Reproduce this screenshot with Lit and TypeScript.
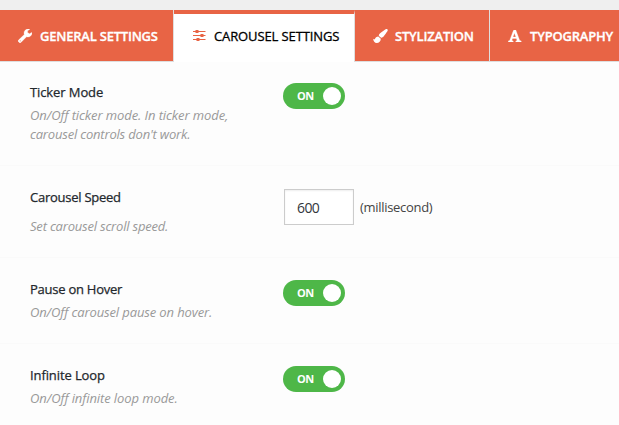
import { LitElement, html, css, svg } from "lit";
import { customElement, property } from "lit/decorators.js";
import { classMap } from "lit/directives/class-map.js";

const icons = {
  wrench: svg`<svg viewBox="0 0 14 14" width="14" height="14"><path fill="currentColor" fill-rule="evenodd" stroke="currentColor" stroke-width=".3" d="M13.700 3.400 11.500 4.700 9.600 3.600V1.700L11.800.4C11.400.1 10.600 0 10 0 7.800 0 6 1.800 6 4c0 .5.1 1 .3 1.400L.5 11.100a1.200 1.200 0 0 0 0 1.700l.7.700a1.200 1.200 0 0 0 1.700 0L8.600 7.800c.4.1.9.2 1.400.2 2.200 0 4-1.800 4-3.700 0-.4-.1-.7-.3-.9ZM2.200 12.400a.6.6 0 1 1 0-1.200.6.6 0 0 1 0 1.200Z"/></svg>`,
  sliders: svg`<svg viewBox="0 0 13 12" width="13" height="12"><path fill="currentColor" d="M0 1h12.500v1.100H0zM0 5h12.500v1.100H0zM0 9h12.500v1.100H0zM2.500 0h3v3H2.500zM7.500 4h3v3h-3zM3.500 8h3v3h-3z"/></svg>`,
  brush: svg`<svg viewBox="0 0 15 14" width="15" height="14"><path fill="currentColor" d="M13.200.1c.8-.3 1.700.4 1.500 1.300-.1.600-3.600 5.700-4.800 6.700-.7.600-1.500.8-2.100.4L6 7C5.600 6.400 5.900 5.700 6.400 5.100 7.500 3.900 12.200.4 13.200.1ZM5.300 7.500l2.500 2.200C7.800 12.300 6.100 14 3.700 14 1.600 14 .5 12.300.1 9.700c.6.4 1.300.8 1.800.5C2.500 8.500 3.500 7.500 5.300 7.500Z"/></svg>`,
  font: svg`<svg viewBox="0 0 14 12" width="14" height="12"><path fill="currentColor" fill-rule="evenodd" stroke="currentColor" stroke-width=".3" d="M5.800 0h2l3.900 10.400 1.500.5V12H7.800v-1.100l1.300-.5-.7-2H4.500l-.7 2 1.400.5V12H.3v-1.100l1.400-.5L5.100 1.300ZM6.400 3 5 7.100h2.900Z"/></svg>`,
};

@customElement("nav-tab")
class NavTab extends LitElement {
  @property() label = "";
  @property() icon: keyof typeof icons = "wrench";
  @property({ type: Boolean }) active = false;
  static styles = css`
    :host { display: block; flex: none; box-sizing: border-box; }
    .tab { display: flex; align-items: center; box-sizing: border-box; height: 52px; padding: 1px 0 0 18px; color: #fff; background: #e86445; border-right: 1px solid #e0dedd; border-bottom: 1px solid #dedede; font-weight: 600; -webkit-text-stroke: 0.3px; }
    .active { color: #000; background: #fff; border-top: 4px solid #e86445; border-bottom: 0; padding: 0 0 4px 18px; font-weight: 500; }
    .icon { display: flex; width: 22px; color: #fff; }
    .active .icon { color: #e86445; padding-left: 1px; width: 21px; }
    .label { white-space: nowrap; }
  `;
  render() {
    return html`<div class=${classMap({ tab: true, active: this.active })}>
      <span class="icon">${icons[this.icon]}</span><span class="label">${this.label}</span>
    </div>`;
  }
}

@customElement("toggle-switch")
class ToggleSwitch extends LitElement {
  static styles = css`
    :host { display: block; }
    .track { display: flex; align-items: center; justify-content: space-between; box-sizing: border-box; width: 62px; height: 26px; padding: 0 4px 0 14px; border-radius: 13px; background: #4eb748; color: #fff; font-size: 11px; font-weight: 700; letter-spacing: -0.4px; }
    .text { margin-top: -1px; }
    .knob { width: 18px; height: 18px; border-radius: 50%; background: #fff; }
  `;
  render() {
    return html`<div class="track"><span class="text">ON</span><span class="knob"></span></div>`;
  }
}

@customElement("app-root")
class AppRoot extends LitElement {
  static styles = css`
    :host { display: block; height: 425px; overflow: hidden; box-sizing: border-box; background: #fdfdfd; border-top: 10px solid #efefef; font: 13px/19px "Open Sans", "Noto Sans", sans-serif; color: #23282d; }
    .tabs { display: flex; width: 640px; }
    .general { width: 174px; letter-spacing: -0.22px; }
    .carousel { width: 181px; letter-spacing: -0.11px; }
    .style { width: 135px; letter-spacing: -0.2px; }
    .typography { width: 150px; letter-spacing: -0.2px; }
    .row { display: grid; grid-template-columns: 253px 1fr; box-sizing: border-box; padding: 22px 0 0 30px; border-bottom: 1px solid #fafafa; }
    .ticker { height: 104px; padding-top: 21px; }
    .speed { height: 92px; }
    .pause { height: 86px; }
    .loop { height: 86px; }
    .title { font-weight: 500; letter-spacing: -0.25px; -webkit-text-stroke: 0.25px; }
    .ticker .title, .loop .title { letter-spacing: -0.1px; }
    .help { margin-top: 4px; width: 215px; color: #999; font-style: italic; letter-spacing: -0.09px; }
    .tight { letter-spacing: -0.19px; }
    .pause .help { letter-spacing: -0.12px; }
    .speed .help { margin-top: 10px; letter-spacing: -0.2px; }
    .field { display: flex; align-items: center; margin: 1px 0 0 1px; height: 36px; }
    .input { box-sizing: border-box; width: 70px; height: 36px; padding: 0 12px; border: 1px solid #ccc; box-shadow: inset 0 1px 2px #00000012; background: #fff; color: #32373c; font: 14px "Open Sans", sans-serif; letter-spacing: -0.6px; }
    .unit { margin-left: 6px; color: #444; letter-spacing: -0.3px; }
  `;
  row(name: string, title: string, help: unknown, control: unknown) {
    return html`<section class="row ${name}">
      <div><div class="title">${title}</div><div class="help">${help}</div></div>
      <div>${control}</div>
    </section>`;
  }
  render() {
    const toggle = html`<toggle-switch></toggle-switch>`;
    return html`
      <nav class="tabs">
        <nav-tab class="general" icon="wrench" label="GENERAL SETTINGS"></nav-tab>
        <nav-tab class="carousel" icon="sliders" label="CAROUSEL SETTINGS" active></nav-tab>
        <nav-tab class="style" icon="brush" label="STYLIZATION"></nav-tab>
        <nav-tab class="typography" icon="font" label="TYPOGRAPHY"></nav-tab>
      </nav>
      ${this.row("ticker", "Ticker Mode", html`On/Off ticker mode. In ticker mode,<br /><span class="tight">carousel controls don't work.</span>`, toggle)}
      ${this.row("speed", "Carousel Speed", "Set carousel scroll speed.",
        html`<div class="field"><input class="input" .value=${"600"} /><span class="unit">(millisecond)</span></div>`)}
      ${this.row("pause", "Pause on Hover", "On/Off carousel pause on hover.", toggle)}
      ${this.row("loop", "Infinite Loop", "On/Off infinite loop mode.", toggle)}
    `;
  }
}
